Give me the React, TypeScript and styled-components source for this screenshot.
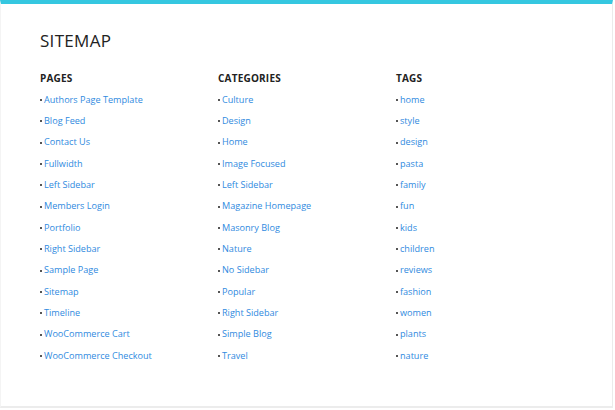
import React from "react";
import styled, { createGlobalStyle } from "styled-components";

const Global = createGlobalStyle`
  html, body { margin: 0; padding: 0; background: #ffffff; }
  body { font-family: "Open Sans", "Liberation Sans", sans-serif; }
`;

const Card = styled.div`
  box-sizing: border-box;
  width: 613px;
  height: 408px;
  background: #ffffff;
  border-top: 4px solid #35c7e0;
  border-right: 1px solid #ebebeb;
  border-bottom: 2px solid #ececec;
  border-left: 1px solid #f4f4f4;
  padding: 25px 0 0 39px;
`;

const Title = styled.h1`
  margin: 0 0 18px;
  font-size: 17px;
  font-weight: 400;
  color: #222;
  letter-spacing: 0.3px;
  line-height: 24px;
`;

const Columns = styled.div`
  display: grid;
  grid-template-columns: 178px 178px 178px;
`;

const Column = styled.div`
  display: flex;
  flex-direction: column;
`;

const Heading = styled.h2`
  margin: 0 0 4px;
  font-size: 10px;
  font-weight: 700;
  color: #222;
  letter-spacing: 0.2px;
  line-height: 14px;
`;

const List = styled.ul`
  list-style: none;
  margin: 0;
  padding: 0;
`;

const Item = styled.li`
  display: flex;
  align-items: center;
  height: 21.33px;
  font-size: 9.1px;
  line-height: 14px;
`;

const Dot = styled.span`
  width: 2px;
  height: 2px;
  background: #555;
  margin: 1px 2px 0 0;
  flex: none;
`;

const Link = styled.a`
  color: #2f8ae0;
  text-decoration: none;
`;

const data: { title: string; items: string[] }[] = [
  {
    title: "PAGES",
    items: [
      "Authors Page Template",
      "Blog Feed",
      "Contact Us",
      "Fullwidth",
      "Left Sidebar",
      "Members Login",
      "Portfolio",
      "Right Sidebar",
      "Sample Page",
      "Sitemap",
      "Timeline",
      "WooCommerce Cart",
      "WooCommerce Checkout",
    ],
  },
  {
    title: "CATEGORIES",
    items: [
      "Culture",
      "Design",
      "Home",
      "Image Focused",
      "Left Sidebar",
      "Magazine Homepage",
      "Masonry Blog",
      "Nature",
      "No Sidebar",
      "Popular",
      "Right Sidebar",
      "Simple Blog",
      "Travel",
    ],
  },
  {
    title: "TAGS",
    items: [
      "home",
      "style",
      "design",
      "pasta",
      "family",
      "fun",
      "kids",
      "children",
      "reviews",
      "fashion",
      "women",
      "plants",
      "nature",
    ],
  },
];

export default function App() {
  return (
    <>
      <Global />
      <Card>
        <Title>SITEMAP</Title>
        <Columns>
          {data.map((col) => (
            <Column key={col.title}>
              <Heading>{col.title}</Heading>
              <List>
                {col.items.map((it) => (
                  <Item key={it}>
                    <Dot />
                    <Link href="#">{it}</Link>
                  </Item>
                ))}
              </List>
            </Column>
          ))}
        </Columns>
      </Card>
    </>
  );
}
